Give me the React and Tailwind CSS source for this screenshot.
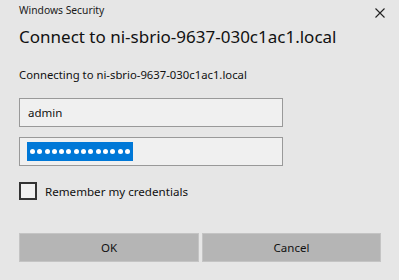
import React from "react";

export default function App() {
  const font = { fontFamily: '"Noto Sans", "Open Sans", sans-serif' };
  return (
    <div className="w-[399px] h-[280px] bg-[#e6e6e6] text-[#000] relative overflow-hidden" style={font}>
      <div className="flex items-start justify-between pl-[19px] pr-[14px] pt-[3px] h-[20px]">
        <div className="text-[10.3px] leading-[15px] text-[#1a1a1a]">Windows Security</div>
        <svg width="10" height="10" viewBox="0 0 10 10" className="mt-[5px]">
          <path d="M0.5 0.5 L9.5 9.5 M9.5 0.5 L0.5 9.5" stroke="#222" strokeWidth="1.1" />
        </svg>
      </div>
      <div className="pl-[19px] mt-[4px] text-[17px] leading-[26px] text-[#111]">Connect to ni-sbrio-9637-030c1ac1.local</div>
      <div className="pl-[19px] mt-[16px] text-[11.3px] leading-[17px] text-[#111]">Connecting to ni-sbrio-9637-030c1ac1.local</div>
      <div className="ml-[19px] mt-[15px] w-[264px] h-[29px] border border-[#999] bg-[#f0f0f0] flex items-center pl-[8px] text-[11.5px] text-[#111]">
        admin
      </div>
      <div className="ml-[19px] mt-[10px] w-[264px] h-[29px] border border-[#999] bg-[#f0f0f0] flex items-center pl-[7px]">
        <div className="h-[19px] w-[106px] bg-[#0078d7] flex items-center justify-between px-[3px]">
          {Array.from({ length: 14 }).map((_, i) => (
            <span key={i} className="block w-[5px] h-[5px] rounded-full bg-white" />
          ))}
        </div>
      </div>
      <div className="ml-[19px] mt-[16px] flex items-center gap-[8px]">
        <div className="w-[18px] h-[18px] border-2 border-[#333] bg-[#f0f0f0]" />
        <div className="text-[11.6px] leading-[17px] text-[#111]">Remember my credentials</div>
      </div>
      <div className="ml-[19px] mt-[33px] flex gap-[3px]">
        <div className="w-[180px] h-[29px] bg-[#b5b5b5] border border-[#c4c4c4] flex items-center justify-center text-[11.5px] text-[#111]">OK</div>
        <div className="w-[179px] h-[29px] bg-[#b5b5b5] border border-[#c4c4c4] flex items-center justify-center text-[11.5px] text-[#111]">Cancel</div>
      </div>
    </div>
  );
}
